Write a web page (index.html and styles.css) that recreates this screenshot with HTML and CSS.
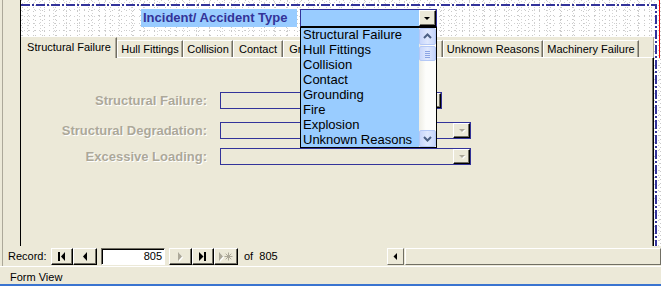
FILE: index.html
```html
<!DOCTYPE html>
<html>
<head>
<meta charset="utf-8">
<title>Incident form</title>
<link rel="stylesheet" href="styles.css">
</head>
<body>
<div class="app">
  <div class="upper">
    <div class="main">
      <div class="gutter"></div>
      <div class="canvas">
        <div class="header">
          <div class="title">Incident/ Accident Type</div>
          <div class="combo">
            <span class="combo-btn"><span class="tri-down"></span></span>
          </div>
        </div>
        <div class="tabctl">
          <div class="tabs">
            <div class="tab sel t-sf">Structural Failure</div>
            <div class="tab t-hf">Hull Fittings</div>
            <div class="tab t-co">Collision</div>
            <div class="tab t-ct">Contact</div>
            <div class="tab t-gr">Grounding</div>
            <div class="tab t-fi">Fire</div>
            <div class="tab t-ex">Explosion</div>
            <div class="tab t-ur">Unknown Reasons</div>
            <div class="tab t-mf">Machinery Failure</div>
          </div>
          <div class="panel">
            <div class="row r1">
              <div class="lbl">Structural Failure:</div>
              <div class="field f-short"><span class="fbtn"><span class="tri-grey"></span></span></div>
            </div>
            <div class="row r2">
              <div class="lbl">Structural Degradation:</div>
              <div class="field"><span class="fbtn"><span class="tri-grey"></span></span></div>
            </div>
            <div class="row r3">
              <div class="lbl">Excessive Loading:</div>
              <div class="field"><span class="fbtn"><span class="tri-grey"></span></span></div>
            </div>
          </div>
        </div>
        <svg class="frame" width="640" height="246" viewBox="0 0 640 246">
          <path d="M0 5 H635 V246" fill="none" stroke="#33339a" stroke-width="2" stroke-dasharray="9 2 2 2"/>
        </svg>
        <div class="redline"></div>
        <div class="droplist">
          <div class="items">
            <div class="item">Structural Failure</div>
            <div class="item">Hull Fittings</div>
            <div class="item">Collision</div>
            <div class="item">Contact</div>
            <div class="item">Grounding</div>
            <div class="item">Fire</div>
            <div class="item">Explosion</div>
            <div class="item">Unknown Reasons</div>
          </div>
          <div class="vscroll">
            <div class="sbtn">
              <svg width="15" height="15" viewBox="0 0 15 15"><path d="M4 9 L7.5 5.5 L11 9" fill="none" stroke="#4d6185" stroke-width="2"/></svg>
            </div>
            <div class="thumb">
              <svg width="15" height="14" viewBox="0 0 15 14"><path d="M5 4.5H10M5 6.5H10M5 8.5H10M5 10.5H10" stroke="#8ca4e4" stroke-width="1"/></svg>
            </div>
            <div class="track"></div>
            <div class="sbtn">
              <svg width="15" height="15" viewBox="0 0 15 15"><path d="M4 6 L7.5 9.5 L11 6" fill="none" stroke="#4d6185" stroke-width="2"/></svg>
            </div>
          </div>
        </div>
      </div>
    </div>
    <div class="navbar">
      <div class="rec-label">Record:</div>
      <div class="nbtn w22">
        <svg width="8" height="9" viewBox="0 0 8 9"><rect x="0" y="0" width="2" height="9" fill="#000"/><polygon points="7,0 3,4.5 7,9" fill="#000"/></svg>
      </div>
      <div class="nbtn w24">
        <svg width="6" height="9" viewBox="0 0 6 9"><polygon points="5,0 1,4.5 5,9" fill="#000"/></svg>
      </div>
      <div class="recnum">805</div>
      <div class="nbtn w23">
        <svg width="7" height="10" viewBox="0 0 7 10"><polygon points="2,1 6,5.5 2,10" fill="#fff"/><polygon points="1,0 5,4.5 1,9" fill="#aca899"/></svg>
      </div>
      <div class="nbtn w22b">
        <svg width="8" height="9" viewBox="0 0 8 9"><polygon points="0,0 4.5,4.5 0,9" fill="#000"/><rect x="5" y="0" width="2" height="9" fill="#000"/></svg>
      </div>
      <div class="nbtn w24">
        <svg width="14" height="10" viewBox="0 0 14 10"><polygon points="1,1 5,5.5 1,10" fill="#fff"/><polygon points="0,0 4,4.5 0,9" fill="#aca899"/><path d="M9.5 0.5V8.5M5.5 4.5H13.5M6.7 1.7L12.3 7.3M12.3 1.7L6.7 7.3" stroke="#aca899" stroke-width="1"/></svg>
      </div>
      <div class="of">of&nbsp; 805</div>
      <div class="hscroll">
        <div class="hbtn">
          <svg width="5" height="7" viewBox="0 0 5 7"><polygon points="4,0 0.5,3.5 4,7" fill="#000"/></svg>
        </div>
        <div class="hthumb"></div>
      </div>
    </div>
  </div>
  <div class="status">Form View</div>
  <div class="taskedge"></div>
</div>
</body>
</html>
```

FILE: styles.css
```css
* { box-sizing: border-box; }
html, body { margin: 0; padding: 0; }
body {
  width: 661px;
  height: 286px;
  overflow: hidden;
  background: #ece9d8;
  font-family: "Liberation Sans", Arial, sans-serif;
  font-size: 11px;
  color: #000;
}
.app { width: 661px; height: 286px; display: flex; flex-direction: column; }
.upper {
  margin-left: 2px;
  border-left: 1px solid #aca899;
  height: 266px;
  display: flex;
  flex-direction: column;
}
.main { height: 246px; display: flex; }
.gutter { width: 17px; flex: none; }
.canvas {
  flex: 1;
  border-left: 1px solid #000;
  position: relative;
  overflow: hidden;
  background:
    conic-gradient(at 1px 1px, transparent 75%, #c8c8c8 0) 0 0 / 7px 5px,
    conic-gradient(at 1px 1px, transparent 75%, #d0d0d0 0) 3px 2px / 5px 7px,
    conic-gradient(at 1px 1px, transparent 75%, #c8c8c8 0) 1px 3px / 11px 4px,
    conic-gradient(at 1px 1px, transparent 75%, #d4d4d4 0) 6px 1px / 13px 3px,
    #fff;
}
.header {
  height: 37px;
  display: flex;
  align-items: flex-start;
  padding: 9px 0 0 120px;
}
.title {
  width: 156px;
  height: 18px;
  background: #99ccff;
  color: #333399;
  font-weight: bold;
  font-size: 13px;
  line-height: 18px;
  padding-left: 2px;
  white-space: nowrap;
}
.combo {
  margin-left: 3px;
  width: 137px;
  height: 18px;
  background: #99ccff;
  border: 1px solid #333399;
  border-bottom-color: #000;
  display: flex;
  justify-content: flex-end;
}
.combo-btn {
  width: 17px;
  height: 16px;
  background: #ece9d8;
  border: 1px solid;
  border-color: #fff #000 #000 #fff;
  box-shadow: inset -1px -1px #716f64;
  display: flex;
  align-items: center;
  justify-content: center;
}
.tri-down {
  width: 0; height: 0;
  border-left: 3px solid transparent;
  border-right: 3px solid transparent;
  border-top: 3px solid #000;
  margin: 1px 1px 0 0;
}
.tri-grey {
  width: 0; height: 0;
  border-left: 3px solid transparent;
  border-right: 3px solid transparent;
  border-top: 3px solid #aca899;
  filter: drop-shadow(1px 1px 0 #fff);
}

/* tab control */
.tabctl { width: 633px; height: 209px; display: flex; flex-direction: column; background: #ece9d8; }
.tabs { height: 20px; display: flex; align-items: flex-end; border-right: 1px solid #aca899; }
.tab {
  height: 17px;
  border: 1px solid;
  border-color: #fff #716f64 transparent #fff;
  border-bottom: 0;
  box-shadow: inset -1px 0 #aca899;
  text-align: center;
  line-height: 16px;
  white-space: nowrap;
  overflow: hidden;
  flex: none;
}
.tab.sel {
  height: 21px;
  margin-bottom: -1px;
  border-top-color: transparent;
  border-left-color: transparent;
  line-height: 19px;
  position: relative;
  z-index: 1;
  background: #ece9d8;
}
.t-sf { width: 96px; }
.t-hf { width: 66px; }
.t-co { width: 50px; }
.t-ct { width: 50px; }
.t-gr { width: 64px; }
.t-fi { width: 36px; }
.t-ex { width: 60px; }
.t-ur { width: 100px; }
.t-mf { width: 96px; }
.panel {
  flex: 1;
  border-top: 1px solid #fff;
  border-right: 1px solid #000;
  box-shadow: inset -1px 0 #716f64;
  padding-top: 34px;
}
.row { display: flex; align-items: center; }
.r2 { margin-top: 13px; }
.r3 { margin-top: 9px; }
.lbl {
  width: 186px;
  margin-right: 13px;
  text-align: right;
  font-weight: bold;
  font-size: 13px;
  color: #aca899;
  text-shadow: 1px 1px 0 #fff;
  white-space: nowrap;
}
.field {
  width: 251px;
  height: 17px;
  border: 1px solid #33339a;
  display: flex;
  justify-content: flex-end;
}
.field.f-short { width: 222px; }
.fbtn {
  width: 17px;
  height: 15px;
  background: #ece9d8;
  border: 1px solid;
  border-color: #fff #000 #000 #fff;
  box-shadow: inset -1px -1px #716f64;
  display: flex;
  align-items: center;
  justify-content: center;
}

/* overlays */
.frame { position: absolute; left: 0; top: 0; pointer-events: none; }
.redline { position: absolute; left: 638px; top: 0; width: 1px; height: 58px; background: #ff0000; }
.droplist {
  position: absolute;
  left: 279px;
  top: 27px;
  width: 137px;
  height: 121px;
  border: 1px solid #000;
  background: #99ccff;
  display: flex;
  z-index: 5;
}
.items { flex: 1; padding-left: 2px; font-size: 13px; }
.item { height: 15px; line-height: 14px; white-space: nowrap; overflow: hidden; }
.vscroll {
  width: 17px;
  display: flex;
  flex-direction: column;
  background: linear-gradient(to right, #eeede5, #fdfdfb 40%, #fdfdfb);
}
.sbtn, .thumb {
  height: 17px;
  border: 1px solid #b4c8f6;
  border-radius: 2px;
  background: linear-gradient(to right, #c8d6fb, #dfe8fe 50%, #c6d5fb);
  display: flex;
  align-items: center;
  justify-content: center;
}
.thumb { height: 15px; margin-top: 1px; }
.track { flex: 1; }

/* record navigation */
.navbar { height: 20px; display: flex; align-items: flex-start; padding: 2px 0 0 5px; }
.rec-label { width: 43px; line-height: 17px; }
.nbtn {
  height: 17px;
  background: #ece9d8;
  border: 1px solid;
  border-color: #fff #000 #000 #fff;
  box-shadow: inset -1px -1px #716f64;
  display: flex;
  align-items: center;
  justify-content: center;
}
.w22 { width: 22px; }
.w22b { width: 22px; }
.w23 { width: 23px; margin-left: 4px; }
.w24 { width: 24px; }
.recnum {
  width: 64px;
  height: 17px;
  margin-left: 4px;
  background: #fff;
  border: 1px solid;
  border-color: #716f64 #fff #fff #716f64;
  box-shadow: inset 1px 1px #000;
  text-align: right;
  padding-right: 2px;
  line-height: 15px;
}
.of { margin-left: 6px; line-height: 17px; }
.hscroll { margin-left: auto; width: 274px; height: 17px; display: flex; }
.hbtn {
  width: 17px;
  height: 17px;
  border: 1px solid;
  border-color: #fff #716f64 #716f64 #fff;
  display: flex;
  align-items: center;
  justify-content: center;
}
.hthumb {
  flex: 1;
  margin-left: 1px;
  border: 1px solid;
  border-color: #fff #716f64 #716f64 #fff;
}
.status {
  height: 18px;
  border-top: 1px solid #fff;
  padding: 3px 0 0 10px;
  line-height: 14px;
}
.taskedge { height: 2px; background: #3a74d0; }
```
